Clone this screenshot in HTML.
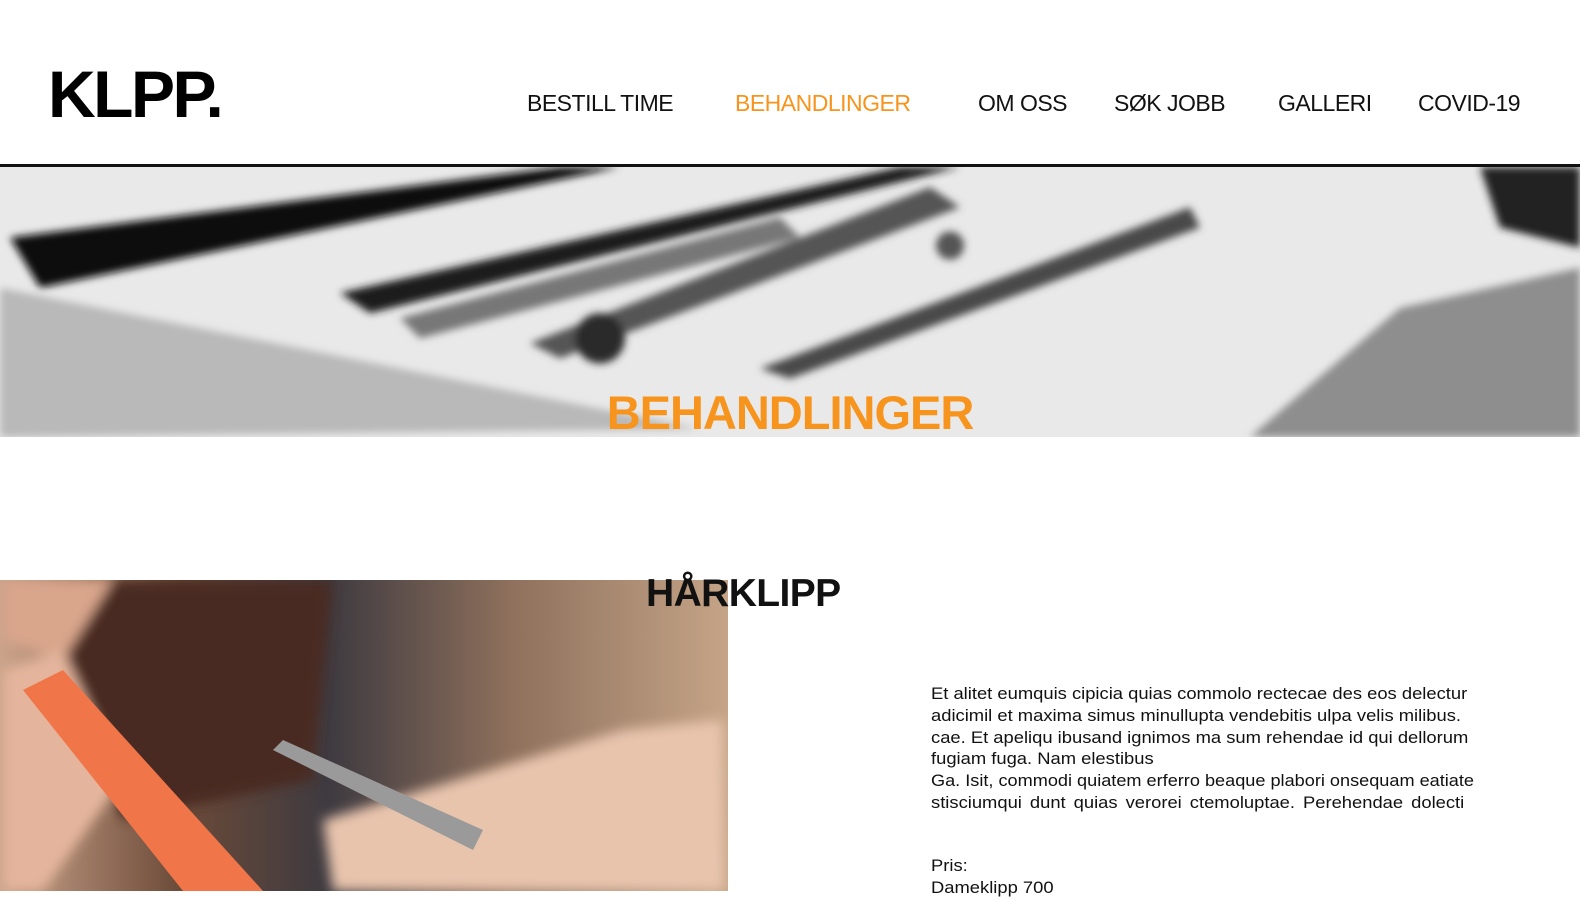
<!DOCTYPE html>
<html><head><meta charset="utf-8"><style>
*{margin:0;padding:0;box-sizing:border-box}
body{width:1580px;height:887px;overflow:hidden;background:#fff;font-family:"Liberation Sans",Arial,sans-serif;position:relative}
.logo{position:absolute;left:48px;top:56px;font-size:66px;font-weight:bold;letter-spacing:-2.5px;color:#000}
.nav a{position:absolute;top:90px;font-size:23px;color:#111;text-decoration:none;letter-spacing:-0.5px;white-space:nowrap}
.line{position:absolute;left:0;top:164px;width:1580px;height:3px;background:#111}
.hero{position:absolute;left:0;top:167px;width:1580px;height:270px;overflow:hidden}
.h1{position:absolute;left:0;width:1580px;top:385px;text-align:center;font-size:47px;font-weight:bold;color:#f7941d;letter-spacing:-1px}
.photo{position:absolute;left:0;top:580px;width:728px;height:311px;overflow:hidden;background:linear-gradient(90deg,#caa38a 0%,#6b4a38 25%,#3e3a40 45%,#8e705c 70%,#c5a487 100%)}
.h2{position:absolute;left:646px;top:572px;font-size:39px;font-weight:bold;letter-spacing:-0.6px;color:#111}
.p{position:absolute;left:931px;font-size:16.8px;line-height:21.8px;color:#111;white-space:nowrap;transform:scaleX(1.095);transform-origin:left}
.j{width:487px;text-align:justify;text-align-last:justify;white-space:normal}
</style></head><body>
<div class="logo">KLPP.</div>
<div class="nav">
<a style="left:527px">BESTILL TIME</a>
<a style="left:735px;color:#f7941d">BEHANDLINGER</a>
<a style="left:978px">OM OSS</a>
<a style="left:1114px">SØK JOBB</a>
<a style="left:1278px">GALLERI</a>
<a style="left:1418px">COVID-19</a>
</div>
<div class="line"></div>
<div class="hero">
<svg width="1580" height="270" viewBox="0 0 1580 268" preserveAspectRatio="none">
<defs><filter id="b"><feGaussianBlur stdDeviation="4"/></filter></defs>
<rect width="1580" height="268" fill="#e9e9e9"/>
<g filter="url(#b)">
<polygon points="0,120 700,260 0,268" fill="#8a8a8a" opacity=".5"/>
<polygon points="1400,140 1580,100 1580,268 1250,268" fill="#8e8e8e"/>
<polygon points="1480,0 1580,0 1580,80 1500,60" fill="#222"/>
<polygon points="10,70 560,0 620,0 40,120" fill="#111"/>
<polygon points="340,125 900,0 960,0 370,145" fill="#1c1c1c"/>
<polygon points="400,150 780,50 800,70 420,170" fill="#777"/>
<polygon points="530,175 930,20 960,40 560,190" fill="#555"/>
<polygon points="760,200 1190,40 1200,60 790,210" fill="#4a4a4a"/>
<circle cx="950" cy="78" r="14" fill="#555"/>
<circle cx="600" cy="170" r="25" fill="#2a2a2a"/>
</g>
</svg>
</div>
<div class="h1">BEHANDLINGER</div>
<div class="photo">
<svg width="728" height="311" viewBox="0 0 722 311">
<defs><filter id="c"><feGaussianBlur stdDeviation="6"/></filter></defs>
<g filter="url(#c)">
<polygon points="40,0 330,0 310,200 120,240 60,120" fill="#4a2c20"/>
<polygon points="0,0 110,0 60,80 0,60" fill="#d9a68c"/>
<polygon points="0,90 60,70 120,200 40,311 0,311" fill="#e4b59c"/>
<polygon points="320,240 620,150 720,140 722,311 330,311" fill="#e8c4ad"/>
</g>
<polygon points="20,110 60,90 260,311 180,311" fill="#f0764a"/>
<polygon points="280,160 480,250 470,270 270,170" fill="#9a9a9a"/>
</svg>
</div>
<div class="h2">HÅRKLIPP</div>
<div class="p" style="top:683px">Et alitet eumquis cipicia quias commolo rectecae des eos delectur</div>
<div class="p" style="top:704.8px">adicimil et maxima simus minullupta vendebitis ulpa velis milibus.</div>
<div class="p" style="top:726.6px">cae. Et apeliqu ibusand ignimos ma sum rehendae id qui dellorum</div>
<div class="p" style="top:748.4px">fugiam fuga. Nam elestibus</div>
<div class="p" style="top:770.2px;transform:scaleX(1.08)">Ga. Isit, commodi quiatem erferro beaque plabori onsequam eatiate</div>
<div class="p j" style="top:792px">stisciumqui dunt quias verorei ctemoluptae. Perehendae dolecti</div>
<div class="p" style="top:855px">Pris:<br>Dameklipp 700</div>
</body></html>
